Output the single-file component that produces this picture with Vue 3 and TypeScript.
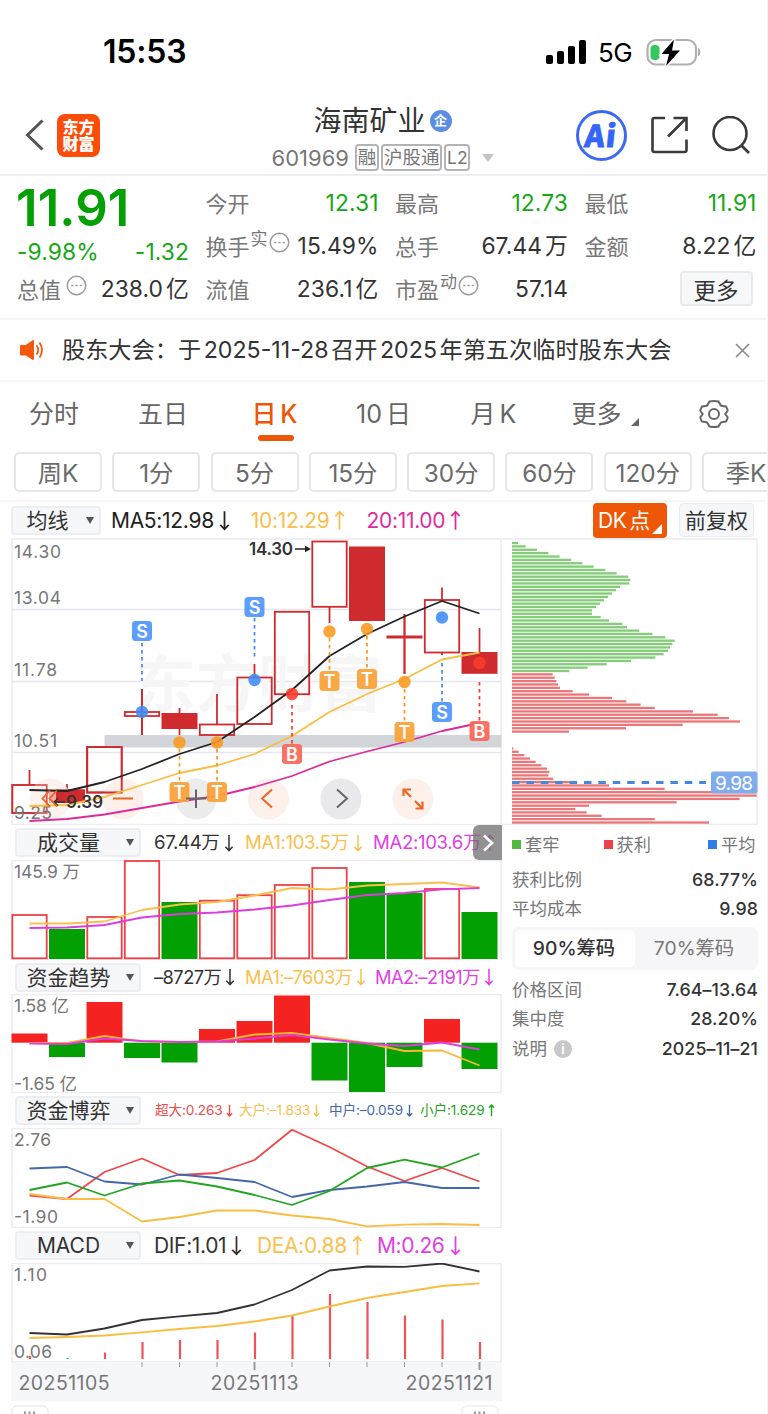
<script setup lang="ts">
interface Marker { i: number; y: number; dot: number; kind: 'S' | 'T' | 'B'; from: number; to: number }
interface Candle { top: number; bottom: number; high: number; low: number; filled: boolean }
interface Series { color: string; ys: number[] }
interface Value { text: string; color: string }

const cx = (i: number): number => 29.5 + 37.5 * i
const line = (ys: number[]): string => ys.map((y, i) => `${cx(i)},${y}`).join(' ')

const periods: string[] = ['周K', '1分', '5分', '15分', '30分', '60分', '120分', '季K']

const candle = (top: number, bottom: number, high: number, low: number, filled = false): Candle =>
  ({ top, bottom, high, low, filled })
const candles: Candle[] = [
  candle(785, 813, 770, 813),
  candle(789.5, 803, 784, 803, true),
  candle(747, 792.5, 747, 792.5),
  candle(712, 716, 689, 735),
  candle(713, 729, 708, 735, true),
  candle(724.5, 735, 694, 735),
  candle(677.5, 724, 664, 724),
  candle(611.8, 694.2, 611.8, 694.2),
  candle(541.5, 606.8, 541.5, 623),
  candle(546.5, 621, 546.5, 621, true),
  candle(635.5, 638.5, 614, 674, true),
  candle(600, 652.5, 587.5, 655),
  candle(652, 673.8, 628, 673.8, true),
]

const averages: Series[] = [
  { color: '#222', ys: [790, 791, 782, 769, 754, 742, 717, 690, 656, 634, 616.5, 601, 613.5] },
  { color: '#f9bd42', ys: [806, 805, 797, 785, 773, 765.5, 754, 736, 712, 694, 679, 659.5, 652.5] },
  { color: '#dc2a98', ys: [821, 819, 814.5, 808, 801.5, 796, 787, 776, 761.5, 751.5, 742, 731, 723] },
]

const markers: Marker[] = [
  { i: 3, y: 631, dot: 712, kind: 'S', from: 643, to: 681 },
  { i: 6, y: 607, dot: 680, kind: 'S', from: 618, to: 657 },
  { i: 4, y: 792, dot: 742.5, kind: 'T', from: 749, to: 782 },
  { i: 5, y: 792, dot: 742.5, kind: 'T', from: 749, to: 782 },
  { i: 7, y: 754, dot: 694, kind: 'B', from: 705, to: 744 },
  { i: 8, y: 681, dot: 631.5, kind: 'T', from: 638, to: 671 },
  { i: 9, y: 679, dot: 629, kind: 'T', from: 636, to: 669 },
  { i: 10, y: 732, dot: 682, kind: 'T', from: 689, to: 722 },
  { i: 11, y: 712, dot: 617.5, kind: 'S', from: 663, to: 702 },
  { i: 12, y: 731, dot: 663, kind: 'B', from: 682, to: 721 },
]
const tagColor = { S: '#5299fb', T: '#faa23c', B: '#fb6a5c' }
const dotColor = { S: '#3f8bf2', T: '#fb971f', B: '#fb3b2a' }

const trapped = [54, 77, 111, 145, 179, 213, 247, 281, 316, 350, 385, 391, 388, 360, 348, 336, 324, 312, 300, 288, 276, 276, 302, 327, 367, 381, 417, 457, 496, 524, 517, 510, 504, 491, 466, 393, 320, 263, 208]
const gainHigh = [158, 164, 169, 174, 180, 218, 267, 336, 379, 422, 464, 579, 653, 687, 720, 548, 378, 207]
const gainLow = [40, 56, 73, 90, 107, 124, 141, 148, 145, 160, 230, 327, 494, 770, 770, 719, 530, 267, 226, 260, 305, 464, 627]
const chips = [
  ...trapped.map((w, k) => ({ w, k, color: '#83cc78' })),
  ...gainHigh.map((w, k) => ({ w, k: k + 39, color: '#ea7679' })),
  ...gainLow.map((w, k) => ({ w, k: k + 61, color: '#ea7679' })),
].map(b => ({ y: 543 + b.k * 3.367 - 1.1, width: (b.w - 36) / 3, color: b.color }))

const volumes = [915, 929, 917, 861, 902, 900.7, 895.2, 885, 868, 882, 893, 889, 912]
const volumeDown = [1, 4, 9, 10, 12]
const volumeLines: Series[] = [
  { color: '#fbbf4b', ys: [923.5, 923.5, 921.5, 910, 904.5, 902, 895.5, 888, 889.5, 885.5, 884, 882.5, 887.5] },
  { color: '#dd3ddd', ys: [928, 927.5, 925, 917.5, 914, 912.5, 909.5, 905.5, 900, 895, 893, 889.3, 888] },
]
const flows = [1033.5, 1057, 1002, 1058, 1062.5, 1029, 1021, 995.5, 1080.5, 1092, 1067, 1019, 1069]
const flowLines: Series[] = [
  { color: '#fbb62f', ys: [1043, 1043, 1036, 1041.3, 1042, 1041.5, 1034.5, 1033, 1038, 1043, 1051, 1050.5, 1065.5] },
  { color: '#dd3ddd', ys: [1043.5, 1044, 1038.5, 1041, 1042, 1041.5, 1038.5, 1035, 1039.5, 1043.5, 1046, 1042.5, 1049.5] },
]
const gameLines: Series[] = [
  { color: '#f04848', ys: [1195.5, 1199, 1172, 1158.5, 1175, 1173, 1160, 1129.8, 1147, 1166.5, 1181, 1168, 1181.5] },
  { color: '#f9bd42', ys: [1194, 1199, 1199, 1221.5, 1217, 1210.5, 1210.5, 1215.5, 1219, 1226.3, 1224.7, 1224, 1225] },
  { color: '#4467a8', ys: [1168.5, 1167, 1181.5, 1184.5, 1174.5, 1178, 1182, 1197, 1190, 1186.5, 1182, 1188, 1188] },
  { color: '#22a622', ys: [1190, 1182.5, 1195.5, 1183.5, 1180.5, 1186.5, 1195, 1205, 1191, 1168, 1159.7, 1167.5, 1153.5] },
]
const macdLines: Series[] = [
  { color: '#333', ys: [1333, 1334.5, 1328.5, 1320, 1316.3, 1313, 1304.5, 1290, 1270.5, 1266.5, 1266.8, 1263.5, 1271.5] },
  { color: '#f9bd42', ys: [1338, 1337, 1335.5, 1332.3, 1329, 1326, 1321.5, 1315.5, 1306.5, 1298, 1292, 1286, 1283.3] },
]
const macdBars = [1356, 1358, 1352.5, 1342, 1340, 1340, 1332.5, 1316, 1294, 1302, 1315.5, 1319.5, 1342]

const volumeValues: Value[] = [
  { text: '67.44万↓', color: 'dark' }, { text: 'MA1:103.5万↓', color: 'gold' }, { text: 'MA2:103.6万↑', color: 'violet' },
]
const flowValues: Value[] = [
  { text: '–8727万↓', color: 'dark' }, { text: 'MA1:–7603万↓', color: 'gold' }, { text: 'MA2:–2191万↓', color: 'violet' },
]
const gameValues: Value[] = [
  { text: '超大:0.263↓', color: 'red' }, { text: '大户:–1.833↓', color: 'gold' },
  { text: '中户:–0.059↓', color: 'navy' }, { text: '小户:1.629↑', color: 'green' },
]
const macdValues: Value[] = [
  { text: 'DIF:1.01↓', color: 'dark' }, { text: 'DEA:0.88↑', color: 'gold' }, { text: 'M:0.26↓', color: 'violet' },
]
const split = (t: string): [string, string] => [t.slice(0, -1), t.slice(-1)]
const arrowPath = (a: string): string => a === '↓' ? 'M5 1V18M1.2 13.500L5 17.500L8.8 13.500' : 'M5 18V1M1.2 5.500L5 1.500L8.8 5.500'
</script>

<template>
  <div class="screen">
    <header class="status">
      <span class="time">15:53</span>
      <div class="signals">
        <svg width="40" height="26" viewBox="0 0 40 26">
          <rect x="0" y="16" width="7" height="9" rx="2" /><rect x="11" y="12" width="7" height="13" rx="2" />
          <rect x="22" y="7" width="7" height="18" rx="2" /><rect x="33" y="1" width="7" height="24" rx="2" />
        </svg>
        <span class="net">5G</span>
        <svg width="56" height="30" viewBox="0 0 56 30">
          <rect x="1.500" y="3" width="48.500" height="24.500" rx="8.500" fill="#fff" stroke="#b0b0b0" stroke-width="2.200" />
          <rect x="4.500" y="8" width="9" height="15" rx="4" fill="#34c759" />
          <path d="M52.500 11.500q3 3.800 0 7.500z" fill="#a9a9a9" stroke="#a9a9a9" />
          <path d="M28 2.500L15.500 17H23L20 29L34 13.500H26Z" fill="#000" stroke="#fff" stroke-width="3" paint-order="stroke" />
        </svg>
      </div>
    </header>

    <nav class="topbar">
      <div class="brand">
        <svg width="20" height="32" viewBox="0 0 20 32"><path d="M17.500 1.500L2.500 16L17.500 30.500" fill="none" stroke="#555" stroke-width="3" /></svg>
        <div class="logo"><span>东方</span><span>财富</span></div>
      </div>
      <div class="stock">
        <div class="name">海南矿业<i>企</i></div>
        <div class="code"><span>601969</span><b>融</b><b>沪股通</b><b>L2</b><em></em></div>
      </div>
      <div class="tools">
        <div class="ai"><span>Ai</span></div>
        <svg width="38" height="38" viewBox="0 0 38 38" fill="none" stroke="#3a3a3a" stroke-width="2.600">
          <path d="M15 2H4.500Q2.500 2 2.500 4V34Q2.500 36 4.500 36H34.500Q36.500 36 36.500 34V23.500M23.500 2H36.500V15M36 2.500L18 20.500" />
        </svg>
        <svg width="40" height="38" viewBox="0 0 40 38" fill="none" stroke="#3a3a3a" stroke-width="2.600">
          <circle cx="20" cy="17.500" r="16.500" /><path d="M31 29L39 37" />
        </svg>
      </div>
    </nav>

    <section class="quote">
      <div class="qcol">
        <div class="price">11.91</div>
        <div class="cell up down"><span>-9.98%</span><span>-1.32</span></div>
        <div class="cell"><label>总值<svg class="more" viewBox="0 0 20 20"><circle cx="10" cy="10" r="8.800" /><path d="M5 10h2M9 10h2M13 10h2" /></svg></label><span>238.0 亿</span></div>
      </div>
      <div class="qcol">
        <div class="cell"><label>今开</label><span class="g">12.31</span></div>
        <div class="cell"><label>换手<sup>实</sup><svg class="more tight" viewBox="0 0 20 20"><circle cx="10" cy="10" r="8.800" /><path d="M5 10h2M9 10h2M13 10h2" /></svg></label><span>15.49%</span></div>
        <div class="cell"><label>流值</label><span>236.1 亿</span></div>
      </div>
      <div class="qcol">
        <div class="cell"><label>最高</label><span class="g">12.73</span></div>
        <div class="cell"><label>总手</label><span>67.44 万</span></div>
        <div class="cell"><label>市盈<sup>动</sup><svg class="more tight" viewBox="0 0 20 20"><circle cx="10" cy="10" r="8.800" /><path d="M5 10h2M9 10h2M13 10h2" /></svg></label><span>57.14</span></div>
      </div>
      <div class="qcol">
        <div class="cell"><label>最低</label><span class="g">11.91</span></div>
        <div class="cell"><label>金额</label><span>8.22 亿</span></div>
        <div class="cell end"><button>更多</button></div>
      </div>
    </section>

    <section class="notice">
      <svg width="24" height="22" viewBox="0 0 24 22"><path d="M1 7h5L13 2v18L6 15.500H1z" fill="#f4580f" stroke="#f4580f" stroke-width="2" stroke-linejoin="round" /><path d="M16.500 6.500q3.500 4.500 0 9M19.500 3.500q5 7.500 0 15" fill="none" stroke="#f4580f" stroke-width="1.800" /></svg>
      <p>股东大会：<span>于 2025-11-28 召开 2025 年第五次临时股东大会</span></p>
      <svg width="15" height="15" viewBox="0 0 15 15"><path d="M1 1L14 14M14 1L1 14" stroke="#888" stroke-width="1.600" /></svg>
    </section>

    <section class="tabs">
      <span>分时</span><span>五日</span><span class="on">日 K</span><span>10 日</span><span>月 K</span>
      <span>更多<i class="corner"></i></span>
      <svg width="30" height="30" viewBox="-15 -15 30 30" fill="none" stroke="#666" stroke-width="2">
        <path d="M-4.500 -12.500Q0 -13.500 4.500 -12.500L6.500 -9Q7 -8 8.500 -8L12 -7.500Q14 -4 13.500 -3L11.300 0L13.500 3Q14 4 12 7.500L8.500 8Q7 8 6.500 9L4.500 12.500Q0 13.500 -4.500 12.500L-6.500 9Q-7 8 -8.500 8L-12 7.500Q-14 4 -13.500 3L-11.300 0L-13.500 -3Q-14 -4 -12 -7.500L-8.500 -8Q-7 -8 -6.500 -9Z" />
        <circle r="5" />
      </svg>
    </section>

    <section class="periods"><span v-for="p in periods" :key="p">{{ p }}</span></section>

    <section class="legend">
      <div class="picker small"><span>均线</span><i></i></div>
      <span class="val ma5">MA5:12.98<svg viewBox="0 0 10 19"><path :d="arrowPath('↓')" /></svg></span>
      <span class="val ma10 gold">10:12.29<svg viewBox="0 0 10 19"><path :d="arrowPath('↑')" /></svg></span>
      <span class="val ma20 pink">20:11.00<svg viewBox="0 0 10 19"><path :d="arrowPath('↑')" /></svg></span>
      <div class="dk">DK 点<i></i></div>
      <div class="fq">前复权</div>
    </section>

    <main class="body">
      <div class="left">
        <svg class="chart" width="491" height="287" viewBox="11 538 491 287">
          <rect x="12" y="539" width="489" height="285.500" class="frame" />
          <path d="M12 609.500H501M12 681.500H501M12 752.500H501" stroke="#e6e6ef" stroke-width="1.300" />
          <text x="134" y="707" class="mark" textLength="248">东方财富</text>
          <rect x="104.500" y="735" width="397" height="12.500" fill="#d2d5da" />
          <g v-for="(c, i) in candles" :key="i" stroke="#cf2b2f" stroke-width="1.800">
            <path :d="`M${cx(i)} ${c.high}V${c.top}M${cx(i)} ${c.bottom}V${c.low}`" />
            <rect v-if="c.filled" :x="cx(i) - 18" :y="c.top" width="36" :height="c.bottom - c.top" fill="#cf2b2f" stroke="none" />
            <rect v-else :x="cx(i) - 17.200" :y="c.top" width="34.400" :height="c.bottom - c.top" fill="none" />
          </g>
          <path d="M404.500 614V674M142 689V735" stroke="#cf2b2f" stroke-width="1.800" />
          <g opacity=".85">
            <circle cx="50" cy="799" r="20.500" fill="#fdeee7" opacity=".8" /><circle cx="123" cy="799" r="20.500" fill="#fdeee7" />
            <circle cx="196" cy="799" r="20.500" fill="#e9e9ea" /><circle cx="268.500" cy="799" r="20.500" fill="#fdeee7" />
            <circle cx="341" cy="799" r="20.500" fill="#e6e6e8" /><circle cx="413" cy="799" r="20.500" fill="#fdeee7" />
          </g>
          <path d="M56 789.500H85V803H56Z" fill="#cf2b2f" />
          <path d="M46.700 785H12.300V813H46.700Z" fill="none" stroke="#cf2b2f" stroke-width="1.600" opacity=".7" />
          <path d="M87 792.500V747.200H121.700V792.500Z" fill="none" stroke="#cf2b2f" stroke-width="1.800" />
          <g class="axis">
            <text x="14" y="557.500" textLength="47">14.30</text><text x="14" y="604" textLength="47">13.04</text>
            <text x="14" y="676" textLength="43">11.78</text><text x="14" y="747" textLength="43">10.51</text>
            <text x="14" y="819" textLength="38">9.25</text>
          </g>
          <polyline v-for="s in averages" :key="s.color" :points="line(s.ys)" :stroke="s.color" class="ln" />
          <g v-for="m in markers" :key="m.i" text-anchor="middle">
            <line :x1="cx(m.i)" :x2="cx(m.i)" :y1="m.from" :y2="m.to" :stroke="dotColor[m.kind]" stroke-width="1.700" stroke-dasharray="3.500 3.500" />
            <circle :cx="cx(m.i)" :cy="m.dot" r="6.200" :fill="dotColor[m.kind]" opacity=".88" />
            <rect :x="cx(m.i) - 10" :y="m.y - 10" width="20" height="20" rx="3.500" :fill="tagColor[m.kind]" opacity=".95" />
            <text :x="cx(m.i)" :y="m.y + 6.500" class="tag">{{ m.kind }}</text>
          </g>
          <text x="249" y="554.800" class="peak" textLength="44">14.30</text>
          <path d="M295 549H309" stroke="#222" stroke-width="1.500" /><path d="M305 545.800L311 549L305 552.200Z" fill="#222" />
          <text x="66" y="808" class="peak" textLength="37">9.39</text>
          <path d="M54 802H65M58 798.500L54 802L58 805.500" stroke="#333" stroke-width="1.400" fill="none" />
          <g fill="none" stroke="#f0651f" stroke-width="1.800">
            <path d="M50 790.500L42.500 798.500L50 806.500M57 790.500L49.500 798.500L57 806.500M113 798.500H133" />
            <path d="M272 789.500L262 798.500L272 807.500" stroke-width="2" />
            <path d="M403.500 796V789.500H411M403.500 789.500L411 797M415 801L422.500 808.500M422.500 801.500V808.500H415.500" stroke-width="2.200" />
          </g>
          <path d="M186 798.500H206M196 789.500V808M337 789.500L347 798.500L337 807.500" fill="none" stroke="#666" stroke-width="2" />
        </svg>

        <div class="row"><div class="picker"><span>成交量</span><i></i></div>
          <div class="vals v1"><span v-for="v in volumeValues" :key="v.text" :class="v.color">{{ split(v.text)[0] }}<svg viewBox="0 0 10 19"><path :d="arrowPath(split(v.text)[1])" /></svg></span></div>
          <div class="fold"><svg width="12" height="18" viewBox="0 0 12 18"><path d="M2 1.500L10 9L2 16.500" fill="none" stroke="#fff" stroke-width="2.600" /></svg></div>
        </div>
        <svg class="chart" width="491" height="100" viewBox="11 860 491 100">
          <rect x="12" y="860.500" width="489" height="99" class="frame" />
          <text x="14" y="877.500" class="axis" textLength="66">145.9 万</text>
          <template v-for="(y, i) in volumes" :key="i">
            <rect v-if="volumeDown.includes(i)" :x="cx(i) - 18" :y="y" width="36" :height="959 - y" fill="#03a003" />
            <rect v-else :x="cx(i) - 17.200" :y="y" width="34.400" :height="958.300 - y" fill="none" stroke="#ee4045" stroke-width="1.800" />
          </template>
          <polyline v-for="s in volumeLines" :key="s.color" :points="line(s.ys)" :stroke="s.color" class="ln" />
        </svg>

        <div class="row"><div class="picker"><span>资金趋势</span><i></i></div>
          <div class="vals v2"><span v-for="v in flowValues" :key="v.text" :class="v.color">{{ split(v.text)[0] }}<svg viewBox="0 0 10 19"><path :d="arrowPath(split(v.text)[1])" /></svg></span></div>
        </div>
        <svg class="chart" width="491" height="99" viewBox="11 994 491 99">
          <rect x="12" y="994.500" width="489" height="98" class="frame" />
          <text x="14" y="1012" class="axis" textLength="55">1.58 亿</text><text x="14" y="1089.500" class="axis" textLength="63">-1.65 亿</text>
          <rect v-for="(y, i) in flows" :key="i" :x="cx(i) - 18" :y="Math.min(y, 1042.700)" width="36" :height="Math.abs(y - 1042.700)" :fill="y < 1042 ? '#f52222' : '#03a003'" />
          <polyline v-for="s in flowLines" :key="s.color" :points="line(s.ys)" :stroke="s.color" class="ln" />
        </svg>

        <div class="row r3"><div class="picker"><span>资金博弈</span><i></i></div>
          <div class="vals v3"><span v-for="v in gameValues" :key="v.text" :class="v.color">{{ split(v.text)[0] }}<svg viewBox="0 0 10 19"><path :d="arrowPath(split(v.text)[1])" /></svg></span></div>
        </div>
        <svg class="chart" width="491" height="100" viewBox="11 1128 491 100">
          <rect x="12" y="1128.500" width="489" height="99" class="frame" />
          <text x="14" y="1146" class="axis" textLength="37">2.76</text><text x="14" y="1223" class="axis" textLength="44">-1.90</text>
          <polyline v-for="s in gameLines" :key="s.color" :points="line(s.ys)" :stroke="s.color" class="ln" />
        </svg>

        <div class="row r3"><div class="picker"><span>MACD</span><i></i></div>
          <div class="vals v4"><span v-for="v in macdValues" :key="v.text" :class="v.color">{{ split(v.text)[0] }}<svg viewBox="0 0 10 19"><path :d="arrowPath(split(v.text)[1])" /></svg></span></div>
        </div>
        <svg class="chart" width="491" height="151" viewBox="11 1263 491 151">
          <rect x="12" y="1263.500" width="489" height="98.500" class="frame" />
          <rect x="11" y="1362" width="491" height="39.500" fill="#f6f7fa" />
          <text x="14" y="1281" class="axis" textLength="33">1.10</text><text x="14" y="1358" class="axis" textLength="38">0.06</text>
          <line v-for="(y, i) in macdBars" :key="i" :x1="cx(i) + .500" :x2="cx(i) + .500" :y1="y" y2="1359" :stroke="i === 1 ? '#3fb83f' : '#ef5357'" stroke-width="2.200" />
          <polyline v-for="s in macdLines" :key="s.color" :points="line(s.ys)" :stroke="s.color" class="ln" />
          <line v-for="i in [3, 4, 5, 6, 7, 8, 9, 10, 11, 12]" :key="i" :x1="cx(i)" :x2="cx(i)" y1="1362" :y2="i % 6 ? 1367 : 1370" stroke="#999" :stroke-width="i % 6 ? 1 : 2" />
          <g class="axis dates">
            <text x="18.500" y="1389.500" textLength="91">20251105</text><text x="210.500" y="1389.500" textLength="88">20251113</text><text x="405.500" y="1389.500" textLength="87">20251121</text>
          </g>
          <g fill="#fff" stroke="#e4e4e8"><rect x="12" y="1406" width="36" height="20" rx="5" /><rect x="462" y="1406" width="36" height="20" rx="5" /></g>
          <path d="M25 1411.500V1416M29.500 1411.500V1416M34 1411.500V1416M475 1411.500V1416M479.500 1411.500V1416M484 1411.500V1416" stroke="#999" stroke-width="2" />
        </svg>
      </div>

      <aside class="right">
        <svg class="chart" width="256" height="287" viewBox="502 538 256 287">
          <path d="M502 539H757V824.500H502" class="frame" stroke="#e2e2ee" />
          <rect v-for="(b, k) in chips" :key="k" x="512" :y="b.y" :width="b.width" height="2.300" :fill="b.color" />
          <path d="M512 782.500H706" stroke="#4488de" stroke-width="3" stroke-dasharray="7.500 6.900" stroke-dashoffset="0" />
          <rect x="711" y="771.500" width="46.500" height="22" rx="2" fill="#80acec" />
          <text x="715" y="789.500" textLength="38" class="avg">9.98</text>
        </svg>
        <div class="keys"><span><i class="kg"></i>套牢</span><span><i class="kr"></i>获利</span><span><i class="kb"></i>平均</span></div>
        <div class="stat"><span>获利比例</span><b>68.77%</b></div>
        <div class="stat"><span>平均成本</span><b>9.98</b></div>
        <div class="switch"><span class="sel">90%筹码</span><span>70%筹码</span></div>
        <div class="stat"><span>价格区间</span><b>7.64–13.64</b></div>
        <div class="stat"><span>集中度</span><b>28.20%</b></div>
        <div class="stat last"><span>说明<i class="info">i</i></span><b>2025–11–21</b></div>
      </aside>
    </main>
  </div>
</template>

<style>
body { margin: 0; background: #fff; }
</style>

<style scoped>
* { box-sizing: border-box; }
.screen { width: 768px; height: 1414px; overflow: hidden; background: #fff; border-right: 1px solid #f3f3f5; color: #333; font-family: Inter, "Noto Sans CJK SC", sans-serif; font-size: 22px; line-height: 1; white-space: nowrap; }
i, em { font-style: normal; }
svg { display: block; flex: none; }

.status { height: 96px; padding: 8px 65px 0 103px; display: flex; align-items: center; justify-content: space-between; color: #000; }
.time { font-size: 32px; font-weight: 600; letter-spacing: -.2px; }
.signals { display: flex; align-items: center; height: 30px; }
.net { font-size: 26px; margin: 1px 13px 0 12px; letter-spacing: -.5px; width: 35px; }

.topbar { height: 80px; padding: 0 17px 0 25px; display: grid; grid-template-columns: 163px 1fr 174px; border-bottom: 2px solid #efeff1; }
.brand { display: flex; align-items: center; gap: 12px; }
.logo { width: 43px; height: 43px; border-radius: 8px; background: #fd4b08; color: #fff; font: 900 16px/17px "Noto Sans CJK SC", sans-serif; display: flex; flex-direction: column; align-items: center; justify-content: center; }
.stock { display: flex; flex-direction: column; align-items: center; padding-top: 9px; }
.name { display: flex; align-items: center; font-size: 28px; height: 32px; padding-left: 1px; }
.name i { width: 22px; height: 22px; margin-left: 4px; border-radius: 50%; background: #5b8de3; color: #fff; font-size: 13px; font-weight: 700; line-height: 21px; text-align: center; }
.code { display: flex; align-items: center; margin-top: 7px; height: 27px; color: #777; padding-left: 2px; }
.code span { font-size: 22px; margin-right: 6px; letter-spacing: 0; }
.code b { height: 27px; border: 2px solid #b3b3b3; border-radius: 4px; font-weight: 400; font-size: 18.500px; line-height: 23px; padding: 0 .800px; margin-right: 2px; }
.code b:nth-of-type(3) { font-size: 17.500px; }
.code em { border: 6.500px solid transparent; border-top: 8px solid #c4c4c4; border-bottom: 0; margin-left: 10px; }
.tools { display: flex; align-items: center; justify-content: space-between; }
.ai { width: 51px; height: 51px; border: 3px solid #3d68f2; border-radius: 50%; color: #3565f6; font: 900 30px/43px "Noto Sans CJK SC", sans-serif; text-align: center; letter-spacing: 1.500px; }
.ai span { display: inline-block; transform: skewX(-6deg); -webkit-text-stroke: .8px #3565f6; }

.quote { height: 144px; padding: 6px 10px 0 17px; display: grid; grid-template-columns: 172px 173px 173px 172px; column-gap: 16.500px; border-bottom: 2px solid #f5f5f6; }
.qcol { display: flex; flex-direction: column; }
.cell { height: 43px; display: flex; justify-content: space-between; align-items: center; font-size: 22.800px; letter-spacing: .1px; word-spacing: -3.500px; }
.cell label { color: #777; font-size: 22px; display: flex; align-items: center; letter-spacing: 0; height: 43px; }
.cell sup { font-size: 17px; margin: -14px 0 0 1px; line-height: 1; }
.g, .down { color: #16a616; }
.price { height: 47px; line-height: 51px; color: #03a003; font-size: 51px; font-weight: 600; letter-spacing: .1px; margin-left: -1px; }
.price + .cell { height: 40px; padding-top: 7px; }
.price + .cell + .cell { height: 41px; }
.more { width: 21px; height: 21px; fill: none; stroke: #999; stroke-width: 1.400; margin: -8px 0 0 5px; }
.more.tight { margin-left: 1px; }
.end { justify-content: flex-end; }
button { width: 73px; height: 35px; margin: -2px 4px 0 0; padding: 0; border: 2px solid #e8eaee; border-radius: 4px; background: #f7f8fa; color: #333; font: 22.500px/28px "Noto Sans CJK SC", sans-serif; }

.notice { height: 62px; padding: 0 17px 0 20px; display: flex; align-items: center; border-bottom: 2px solid #f6f6f7; }
.notice p { flex: 1; margin: 1px 0 0 18px; font-size: 23.200px; word-spacing: -4px; }

.tabs { height: 70px; padding: 0 0 6px 29px; display: grid; grid-template-columns: 109px 113.500px 104.500px 114.500px 101px 127px 30px; align-items: center; color: #666; font-size: 25px; word-spacing: -3px; }
.tabs span { position: relative; height: 44px; line-height: 44px; }
.tabs .on { color: #ee5607; font-weight: 500; }
.tabs .on::after { content: ""; position: absolute; left: 6px; bottom: -5px; width: 36px; height: 6px; border-radius: 3px; background: #ee5607; }
.corner { display: inline-block; border-left: 8px solid transparent; border-bottom: 8px solid #666; margin-left: 9px; vertical-align: -3px; }

.periods { height: 50px; padding: 0 0 0 14px; display: flex; gap: 10.300px; border-bottom: 2px solid #f6f6f7; overflow: hidden; }
.periods span { flex: 0 0 88px; height: 40px; border: 2px solid #e7e7e9; border-radius: 5px; text-align: center; line-height: 38px; font-size: 24.300px; color: #6b6b6b; }

.legend { height: 36px; padding: 0 13px 0 11px; display: flex; align-items: center; font-size: 21px; }
.picker { width: 126px; height: 29px; flex: none; display: flex; align-items: center; border: 2px solid #eceef1; border-radius: 4px; background: #f6f7f9; font-size: 21px; color: #333; }
.picker span { flex: 1; text-align: center; padding-right: 2px; }
.picker i { border: 4.500px solid transparent; border-top: 7px solid #555; border-bottom: 0; margin: 0 5px 0 4px; }
.picker.small { width: 90px; }
.picker.small span { padding-right: 0; }
.val, .vals span { display: flex; align-items: center; }
.val svg, .vals svg { width: 10px; height: 18px; margin-left: 4px; fill: none; stroke: currentColor; stroke-width: 1.600; }
.val { letter-spacing: -.3px; }
.val svg, .v4 svg { width: 11px; height: 21px; margin-left: 5px; }
.ma5 { width: 140px; margin-left: 10px; color: #222; }
.ma10 { width: 116px; }
.ma20 { width: 227px; }
.gold { color: #fabf4f; }
.pink { color: #e02b9b; }
.violet { color: #e03fe3; }
.red { color: #f04a4a; }
.navy { color: #4467a8; }
.green { color: #1fa51f; }
.dark { color: #333; }
.dk { position: relative; width: 74px; height: 35px; flex: none; border-radius: 4px; background: #ed5705; color: #fff; line-height: 35px; padding-left: 5px; word-spacing: -3px; letter-spacing: -.3px; margin-right: 12px; }
.dk i { position: absolute; right: 5px; bottom: 4px; border-left: 10px solid transparent; border-bottom: 10px solid #fff; }
.fq { width: 75px; height: 34px; flex: none; border: 1px solid #eaecf0; border-radius: 4px; background: #f6f7f9; line-height: 33px; text-align: center; }

.body { display: flex; padding-left: 11px; }
.left { width: 491px; }
.frame { fill: none; stroke: #ececf1; stroke-width: 1.500; }
.axis { font-size: 17.500px; fill: #777; }
.dates { font-size: 19.500px; }
.mark { font-size: 62px; font-weight: 700; fill: #f6f6f7; }
.peak { font-size: 17px; font-weight: 600; fill: #333; }
.tag { font-size: 18px; font-weight: 600; fill: #fff; }
.avg { font-size: 19px; fill: #fff; }
.ln { fill: none; stroke-width: 1.800; stroke-linejoin: round; }
.row { position: relative; height: 35px; padding: 0 0 0 4px; display: flex; align-items: center; }
.row + .chart + .row { height: 34px; }
.row.r3.r3 { height: 35px; }
.vals { display: grid; margin-left: 13px; font-size: 18.600px; letter-spacing: -.35px; align-items: center; }
.v1 { grid-template-columns: 91px 128px 120px; }
.v2 { grid-template-columns: 91px 130px 120px; font-size: 18.300px; letter-spacing: -.55px; }
.v3 { grid-template-columns: 84px 90px 91px 80px; font-size: 13.600px; letter-spacing: -.1px; margin-left: 14px; }
.v3 svg { height: 13px; width: 7px; margin-left: 3px; stroke-width: 2; }
.v4 { grid-template-columns: 103px 120px 100px; font-size: 21px; }
.fold { position: absolute; right: 0; top: 0; width: 29px; height: 35px; border-radius: 6px 0 0 6px; background: rgba(110, 110, 110, .75); display: flex; align-items: center; justify-content: center; }

.right { width: 256px; }
.keys { height: 40px; padding-left: 10px; display: grid; grid-template-columns: 91.500px 104.500px auto; align-items: center; font-size: 17.200px; color: #777; }
.keys span { display: flex; align-items: center; }
.keys i { width: 9px; height: 9px; margin-right: 4px; }
.kg { background: #55b83f; }
.kr { background: #e8444a; }
.kb { background: #2f7de2; }
.stat { height: 29px; padding-left: 10px; display: flex; justify-content: space-between; align-items: center; font-size: 17.500px; color: #777; }
.stat b { color: #333; font-size: 17.800px; font-weight: 500; letter-spacing: .1px; }
.stat span { display: flex; align-items: center; }
.stat.last { height: 32px; }
.switch { margin: 4px 0 5px 10px; height: 43px; padding: 3px; display: flex; border-radius: 7px; background: #f6f6f9; font-size: 19.300px; color: #777; }
.switch span { flex: 1; line-height: 37px; text-align: center; padding-right: 2px; }
.switch .sel { background: #fff; border-radius: 5px; color: #333; font-weight: 500; }
.info { width: 18px; height: 18px; margin-left: 7px; border-radius: 50%; background: #c8c8c8; color: #fff; font-size: 13px; font-weight: 600; line-height: 18px; text-align: center; }
</style>
